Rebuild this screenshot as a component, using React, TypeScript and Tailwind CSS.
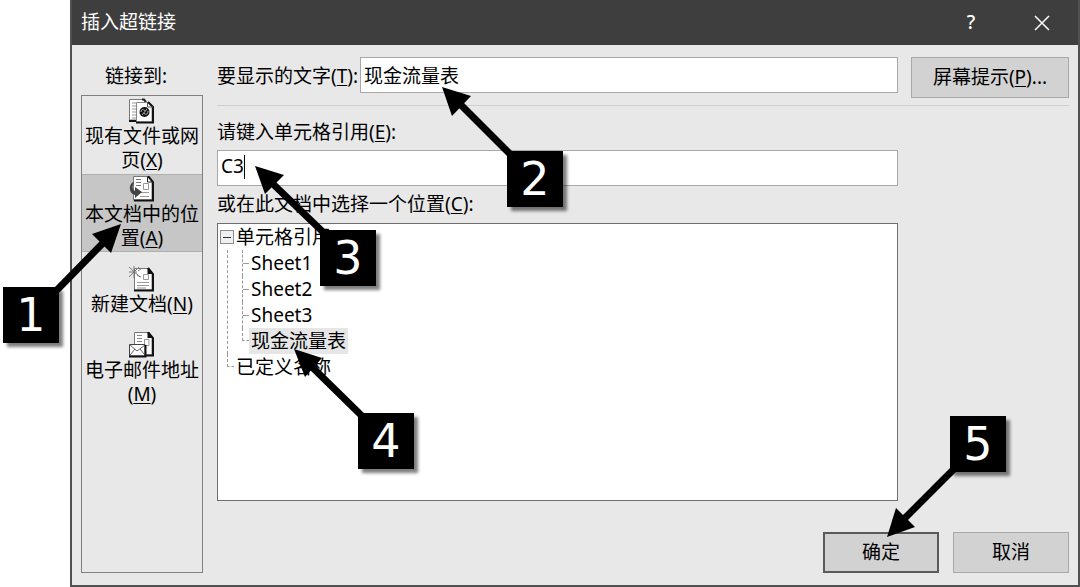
import React from "react";

const sheets = ["Sheet1", "Sheet2", "Sheet3", "现金流量表"];

const callouts = [
  { label: "1", position: "left-[3px] top-[287px]" },
  { label: "2", position: "left-[507px] top-[151px]" },
  { label: "3", position: "left-[320px] top-[230px]" },
  { label: "4", position: "left-[358px] top-[413px]" },
  { label: "5", position: "left-[950px] top-[416px]" },
];

const arrows = [
  { head: "121,224 92,234 111,253", shaft: "M57 290 L104 242" },
  { head: "442,87 471,96 452,116", shaft: "M510 154 L460 104" },
  { head: "255,166 284,175 265,194", shaft: "M324 233 L272 183" },
  { head: "294,349 322,358 305,377", shaft: "M363 417 L312 367" },
  { head: "887,537 896,508 915,527", shaft: "M954 469 L904 519" },
];

const WebIcon: React.FC = () => (
  <svg width="26" height="26" viewBox="0 0 26 26" aria-hidden="true">
    <path d="M0.500 1.500H14L17 5V22H0.500Z" fill="#fff" stroke="#777" />
    <path d="M3 5H7M3 8H7M3 11H7M3 14H7M3 17H7M3 20H7" stroke="#999" />
    <path d="M0 23H8" stroke="#111" strokeWidth="2" />
    <path d="M13 1.500H15L17 4" fill="none" stroke="#222" strokeWidth="2" />
    <path d="M7.500 4.500H20L23 8V24H7.500Z" fill="#fff" stroke="#888" />
    <path d="M19 4L24 9V24.500H7" fill="none" stroke="#111" strokeWidth="2" />
    <path d="M18.500 4V9H24" fill="none" stroke="#555" />
    <circle cx="15.500" cy="14" r="5" fill="#111" />
    <path d="M12 14C12 11 15 11 16 13M15 15C16 17 19 17 19 13M13 17L18 11" fill="none" stroke="#bbb" />
  </svg>
);

const PlaceIcon: React.FC = () => (
  <svg width="26" height="26" viewBox="0 0 26 26" aria-hidden="true">
    <path d="M4.500 0.500H19L23 5V24H4.500Z" fill="#fff" stroke="#777" />
    <path d="M7 3.500H12M7 6.500H12M7 9.500H12" stroke="#777" />
    <path d="M14.500 7.500H19.500V13.500H14.500Z" fill="#fff" stroke="#999" />
    <path d="M12 16.500H20M11 20.500H20" stroke="#999" />
    <path d="M19 0L24 6V24.500H5" fill="none" stroke="#111" strokeWidth="2" />
    <path d="M18.500 1V6H24" fill="none" stroke="#222" />
    <path d="M4 6C-1 9 0 18 6 19V22L13 16L6 11V15C3 13 3 10 5 7Z" fill="#444" />
  </svg>
);

const NewIcon: React.FC = () => (
  <svg width="26" height="26" viewBox="0 0 26 26" aria-hidden="true">
    <path d="M5.500 2.500H19L23 7V24H5.500Z" fill="#fff" stroke="#777" />
    <path d="M19 2L24 8V24.500H5" fill="none" stroke="#111" strokeWidth="2" />
    <path d="M18.500 2V8H24Z" fill="#111" />
    <path d="M0 1L11 11M5 0V12M0 6H8M10 1L0 11" stroke="#777" />
    <path d="M9 5L13 2M8 9L12 11" stroke="#777" />
    <path d="M14.500 8.500H19.500V13.500H14.500Z" fill="#fff" stroke="#999" />
    <path d="M8 16.500H20M8 19.500H20M8 22H17" stroke="#999" />
  </svg>
);

const MailIcon: React.FC = () => (
  <svg width="26" height="26" viewBox="0 0 26 26" aria-hidden="true">
    <path d="M5.500 0.500H19L23 5V23H5.500Z" fill="#fff" stroke="#777" />
    <path d="M19 0L24 6V23.500H17" fill="none" stroke="#111" strokeWidth="2" />
    <path d="M18.500 0V6H24Z" fill="#111" />
    <path d="M8 3.500H13M8 6.500H13M8 9.500H13" stroke="#888" />
    <path d="M15.500 7.500H20V13.500H15.500Z" fill="#fff" stroke="#999" />
    <path d="M0.500 12.500H16V24H0.500Z" fill="#fff" stroke="#444" />
    <path d="M1 13L8 19L16 13M1 23L6 17M16 23L11 17" fill="none" stroke="#666" />
    <path d="M0 24.500H16.500V13" fill="none" stroke="#111" strokeWidth="2" />
  </svg>
);

const places = [
  { icon: <WebIcon />, lines: ["现有文件或网", "页"], accessKey: "X" },
  { icon: <PlaceIcon />, lines: ["本文档中的位", "置"], accessKey: "A", active: true },
  { icon: <NewIcon />, lines: ["新建文档"], accessKey: "N" },
  { icon: <MailIcon />, lines: ["电子邮件地址", ""], accessKey: "M" },
];

const Key: React.FC<{ name: string }> = ({ name }) => (
  <>(<span className="underline decoration-1 underline-offset-2">{name}</span>)</>
);

const Sidebar: React.FC = () => (
  <nav aria-label="链接到" className="flex w-[122px] shrink-0 flex-col">
    <h2 className="pr-3 pt-px text-center leading-[37px]">链接到:</h2>
    <div className="flex-1 border border-[#808080]">
      {places.map((place) => (
        <button
          key={place.accessKey}
          type="button"
          aria-pressed={!!place.active}
          className={
            place.active
              ? "flex h-[78px] w-full flex-col items-center justify-center border-y border-[#b0b0b0] bg-[#c6c6c6] leading-6"
              : "flex h-[78px] w-full flex-col items-center justify-center leading-6"
          }
        >
          {place.icon}
          {place.lines.map((line, i) => (
            <span key={i} className="whitespace-nowrap">
              {line}
              {i === place.lines.length - 1 && <Key name={place.accessKey} />}
            </span>
          ))}
        </button>
      ))}
    </div>
  </nav>
);

const LocationTree: React.FC = () => (
  <ul className="min-h-[160px] flex-1 border border-[#6e6e6e] bg-white leading-[26px]">
    <li>
      <div className="flex h-[26px] items-center pl-[2px]">
        <button
          type="button"
          aria-label="折叠"
          className="mr-[2px] flex h-[14px] w-[14px] items-center justify-center border border-[#8c8c8c] bg-[#f0f0f0]"
        >
          <span className="h-px w-2 bg-[#333]" />
        </button>
        单元格引用
      </div>
      <ul className="ml-[9px] border-l border-dashed border-[#999] pl-[14px]">
        {sheets.map((sheet, i) => (
          <li key={sheet} className="flex h-[26px] items-center">
            {i < sheets.length - 1 ? (
              <span className="flex h-full w-[7px] items-center border-l border-dashed border-[#999]">
                <span className="w-full border-t border-dashed border-[#999]" />
              </span>
            ) : (
              <span className="h-1/2 w-[7px] self-start border-b border-l border-dashed border-[#999]" />
            )}
            <button type="button" className={sheet === "现金流量表" ? "bg-[#e6e6e6] px-[2px]" : "px-[2px]"}>
              {sheet}
            </button>
          </li>
        ))}
      </ul>
    </li>
    <li className="flex h-[26px] pl-[9px]">
      <span className="mr-[2px] h-1/2 w-[7px] border-b border-l border-dashed border-[#999]" />
      已定义名称
    </li>
  </ul>
);

export default function App() {
  return (
    <div className="relative flex min-h-screen bg-white pl-[70px] font-['Noto_Sans','Noto_Sans_CJK_SC',sans-serif] text-[19px] text-black">
      <div role="dialog" aria-label="插入超链接" className="flex flex-1 flex-col border-2 border-t-0 border-[#505050] bg-[#e8e8e8]">
        <header className="flex h-[45px] items-center bg-[#3e3e3e] pl-[9px] text-white">
          <h1 className="flex-1">插入超链接</h1>
          <button type="button" aria-label="帮助" className="w-[70px] text-center font-medium">?</button>
          <button type="button" aria-label="关闭" className="flex w-[72px] justify-center">
            <svg width="16" height="16" viewBox="0 0 16 16" aria-hidden="true">
              <path d="M1 1L15 15M15 1L1 15" stroke="#fff" strokeWidth="1.500" />
            </svg>
          </button>
        </header>

        <form className="flex flex-1 gap-[14px] px-[9px] pb-3 pt-3">
          <Sidebar />
          <div className="flex min-w-0 flex-1 flex-col">
            <div className="flex items-start">
              <label htmlFor="display-text" className="w-[143px] whitespace-nowrap leading-[38px]">
                要显示的文字<Key name="T" />:
              </label>
              <input
                id="display-text"
                defaultValue="现金流量表"
                className="h-9 min-w-0 flex-1 border border-[#a8a8a8] bg-white px-[3px] outline-none"
              />
              <button type="button" className="ml-[13px] h-[41px] w-[158px] border border-[#a8a8a8] bg-[#d2d2d2]">
                屏幕提示<Key name="P" />...
              </button>
            </div>
            <hr className="mt-[7px] border-[#cfcfcf]" />

            <div className="mr-[171px] flex flex-1 flex-col">
              <label htmlFor="cell-ref" className="mt-2 leading-9">
                请键入单元格引用<Key name="E" />:
              </label>
              <div className="relative">
                <input
                  id="cell-ref"
                  defaultValue="C3"
                  className="block h-9 w-full border border-[#a8a8a8] bg-white px-[3px] pb-1 outline-none"
                />
                <span className="absolute left-[27px] top-[5px] h-6 w-px bg-black" />
              </div>
              <h2 className="leading-[37px]">
                或在此文档中选择一个位置<Key name="C" />:
              </h2>
              <LocationTree />
            </div>

            <div className="mt-[31px] flex justify-end gap-[14px]">
              <button type="submit" className="h-[41px] w-[116px] border-2 border-[#5a5a5a] bg-[#d2d2d2]">确定</button>
              <button type="button" className="h-[41px] w-[116px] border border-[#a8a8a8] bg-[#d2d2d2]">取消</button>
            </div>
          </div>
        </form>
      </div>

      {/* numbered steps over the dialog */}
      <svg className="pointer-events-none absolute left-0 top-0 h-[587px] w-[1080px]" viewBox="0 0 1080 587" aria-hidden="true">
        {arrows.map((arrow) => (
          <g key={arrow.head}>
            <path d={arrow.shaft} stroke="#000" strokeWidth="7" />
            <polygon points={arrow.head} />
          </g>
        ))}
      </svg>
      {callouts.map((callout) => (
        <span
          key={callout.label}
          className={`pointer-events-none absolute flex h-14 w-14 items-center justify-center bg-black font-['DejaVu_Sans',sans-serif] text-[46px] leading-none text-white shadow-[4px_4px_3px_rgba(0,0,0,0.5)] ${callout.position}`}
        >
          {callout.label}
        </span>
      ))}
    </div>
  );
}
